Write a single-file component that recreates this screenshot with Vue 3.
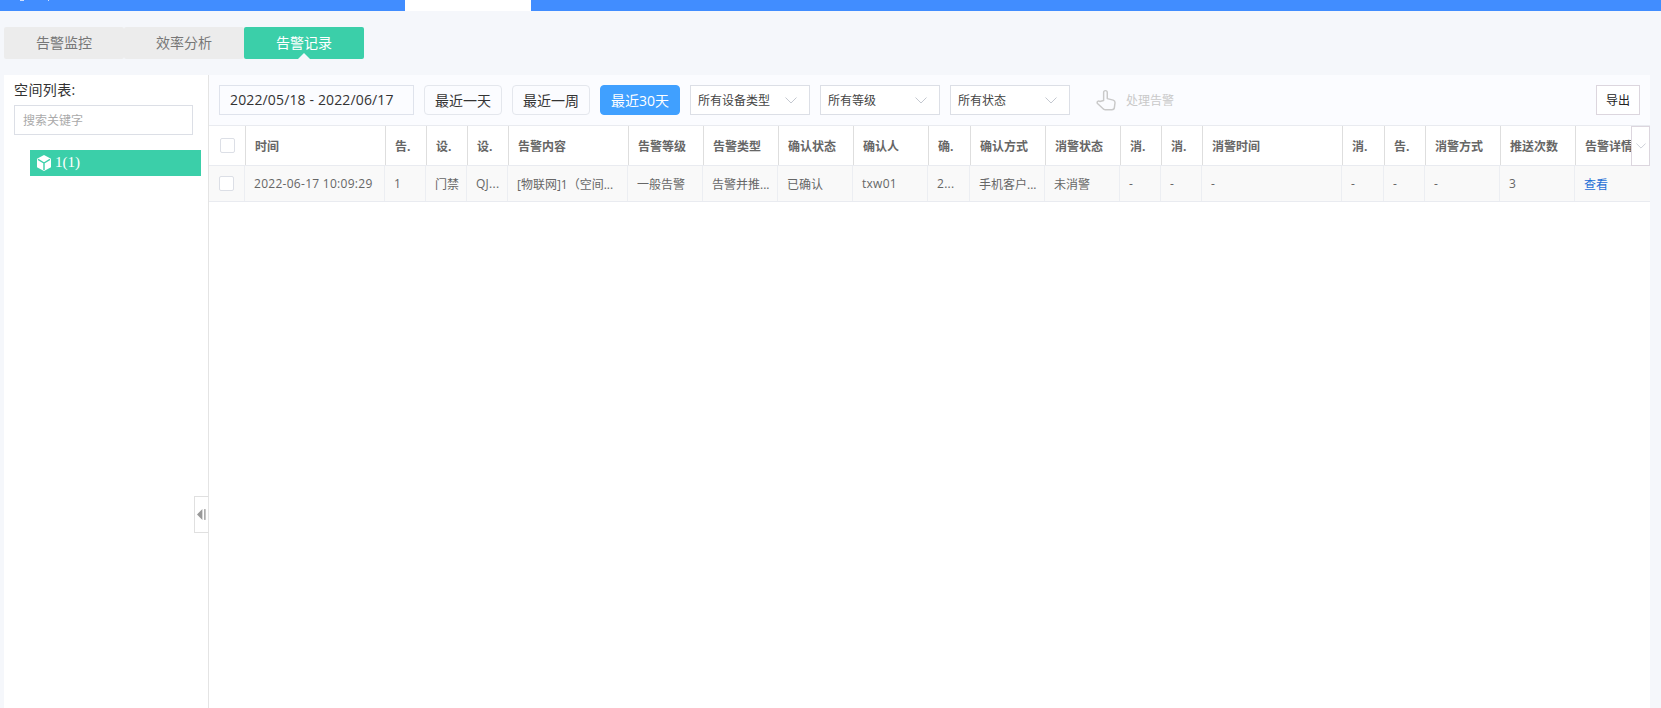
<template>
  <div class="page">
    <div class="topbar">
      <span class="topbar__mark"></span>
      <span class="topbar__mark topbar__mark--small"></span>
      <span class="topbar__tab"></span>
    </div>

    <nav class="tabs">
      <a v-for="t in tabs" :key="t" class="tab" :class="{ 'tab--active': t === activeTab }">{{ t }}</a>
    </nav>

    <main class="main">
      <aside class="side">
        <div class="side__title">空间列表:</div>
        <input class="side__search" placeholder="搜索关键字" />
        <div class="tree-item">
          <svg class="tree-item__icon" viewBox="0 0 14 16" aria-hidden="true">
            <path fill="#fff" d="M7 0 14 3.8V12.2L7 16 0 12.2V3.8z" />
            <path fill="none" stroke="#3bcfa9" stroke-width="1.4" d="M1 4.4 7 8 13 4.4M7 8V15" />
          </svg>
          <span>1(1)</span>
        </div>
        <div class="side__toggle">
          <svg viewBox="0 0 10 12" width="9" height="11" aria-hidden="true">
            <path fill="#999" d="M6 0V12L0 6z" />
            <rect x="8" y="0" width="1.5" height="12" fill="#999" />
          </svg>
        </div>
      </aside>

      <section class="content">
        <div class="toolbar">
          <div class="date">2022/05/18 - 2022/06/17</div>
          <button class="btn">最近一天</button>
          <button class="btn">最近一周</button>
          <button class="btn btn--active">最近30天</button>
          <div v-for="s in selects" :key="s" class="select">
            <span>{{ s }}</span>
            <svg viewBox="0 0 12 7" width="12" height="7" aria-hidden="true">
              <path fill="none" stroke="#c4c8d0" stroke-width="1" d="M.5.5 6 6 11.5.5" />
            </svg>
          </div>
          <div class="handle">
            <svg viewBox="0 0 24 24" width="23" height="23" aria-hidden="true">
              <path fill="none" stroke="#c9c9c9" stroke-width="1.5" stroke-linejoin="round" stroke-linecap="round"
                d="M9 12V3.6a1.9 1.9 0 0 1 3.8 0V10l6.2 1.6c1.3.4 2 1.4 1.9 2.7L20.3 19c-.1 1.6-1.3 2.6-2.8 2.6H10.6c-1 0-1.8-.4-2.4-1.2L2.6 15.2c-.6-.7-.5-1.7.2-2.2.7-.6 1.6-.6 2.3 0z" />
            </svg>
            <span>处理告警</span>
          </div>
          <button class="export">导出</button>
        </div>

        <div class="table">
          <div class="row row--head" :style="{ gridTemplateColumns: headCols }">
            <div class="cell cell--check"><span class="check"></span></div>
            <div v-for="(c, i) in columns" :key="i" class="cell">{{ c.label }}</div>
          </div>
          <div class="row row--body" :style="{ gridTemplateColumns: bodyCols }">
            <div class="cell cell--check"><span class="check"></span></div>
            <div v-for="(c, i) in columns" :key="i" class="cell" :class="{ 'cell--link': c.link, 'cell--num': c.num }">{{ c.value }}</div>
          </div>
          <div class="table__more">
            <svg viewBox="0 0 12 7" width="10" height="6" aria-hidden="true">
              <path fill="none" stroke="#c4c8d0" stroke-width="1" d="M.5.5 6 6 11.5.5" />
            </svg>
          </div>
        </div>
      </section>
    </main>
  </div>
</template>

<script setup>
import { computed } from 'vue'

const tabs = ['告警监控', '效率分析', '告警记录']
const activeTab = '告警记录'
const selects = ['所有设备类型', '所有等级', '所有状态']

const columns = [
  { label: '时间', width: 140, value: '2022-06-17 10:09:29', num: true },
  { label: '告.', width: 41, value: '1' },
  { label: '设.', width: 41, value: '门禁' },
  { label: '设.', width: 41, value: 'QJ...', num: true },
  { label: '告警内容', width: 120, value: '[物联网]1（空间...' },
  { label: '告警等级', width: 75, value: '一般告警' },
  { label: '告警类型', width: 75, value: '告警并推...' },
  { label: '确认状态', width: 75, value: '已确认' },
  { label: '确认人', width: 75, value: 'txw01', num: true },
  { label: '确.', width: 42, value: '2...', num: true },
  { label: '确认方式', width: 75, value: '手机客户...' },
  { label: '消警状态', width: 75, value: '未消警' },
  { label: '消.', width: 41, value: '-' },
  { label: '消.', width: 41, value: '-' },
  { label: '消警时间', width: 140, value: '-' },
  { label: '消.', width: 42, value: '-' },
  { label: '告.', width: 41, value: '-' },
  { label: '消警方式', width: 75, value: '-' },
  { label: '推送次数', width: 75, value: '3' },
  { label: '告警详情', width: 75, value: '查看', link: true }
]

const headCols = computed(() => ['37px', ...columns.map((c) => c.width + 'px')].join(' '))
// 表体比表头左移 1px
const bodyCols = computed(() => {
  const w = columns.map((c) => c.width + 'px')
  w[w.length - 1] = '76px'
  return ['36px', ...w].join(' ')
})
</script>

<style>
html, body { margin: 0; background: #f5f7fb; }
</style>

<style scoped>
.page { height: 708px; display: flex; flex-direction: column; overflow: hidden; background: #f5f7fb; font-family: "Open Sans", "Noto Sans CJK SC", sans-serif; color: #333; }

.topbar { height: 11px; flex: none; background: #418dff; display: flex; align-items: flex-start; padding-left: 20px; }
.topbar__mark { width: 4px; height: 1px; background: #cfe0ff; }
.topbar__mark--small { width: 1px; margin-left: 24px; }
.topbar__tab { width: 126px; height: 11px; background: #fff; margin-left: 356px; }

.tabs { display: flex; margin: 16px 0 16px 4px; flex: none; }
.tab { position: relative; width: 120px; height: 32px; line-height: 32px; text-align: center; font-size: 14px; color: #777; background: #ececec; border-radius: 2px; }
.tab--active { background: #3bcfa9; color: #fff; }
.tab--active::after { content: ""; position: absolute; left: 54px; bottom: 0; border: 6px solid transparent; border-top: 0; border-bottom-color: #f5f7fb; }

.main { flex: 1; min-height: 0; display: flex; margin: 0 11px 0 4px; }

.side { position: relative; width: 205px; flex: none; box-sizing: border-box; background: #fff; border-right: 1px solid #e4e4e4; padding: 5px 15px 0 10px; }
.side__title { font-size: 14px; line-height: 20px; color: #333; height: 25px; letter-spacing: .4px; }
.side__search { display: block; width: 179px; height: 30px; box-sizing: border-box; border: 1px solid #dcdfe6; padding: 0 8px; font: 12px "Open Sans", "Noto Sans CJK SC", sans-serif; outline: none; }
.side__search::placeholder { color: #aaa; opacity: 1; }
.tree-item { display: flex; align-items: center; gap: 4px; width: 171px; height: 26px; box-sizing: border-box; margin: 15px 0 0 16px; padding-left: 7px; background: #3bcfa9; color: #fff; font: 15px/24px "Liberation Serif", serif; }
.tree-item__icon { width: 14px; height: 16px; flex: none; }
.tree-item span { height: 26px; line-height: 24px; }
.side__toggle { position: absolute; right: -1px; top: 421px; width: 13px; height: 35px; display: flex; align-items: center; justify-content: center; background: #fff; border: 1px solid #e0e0e0; border-right-color: #e4e4e4; }

.content { flex: 1; min-width: 0; display: flex; flex-direction: column; background: #fff; }
.toolbar { height: 50px; flex: none; display: flex; align-items: center; box-sizing: border-box; padding: 0 10px; background: #fbfcff; }
.date { width: 195px; height: 30px; box-sizing: border-box; border: 1px solid #dfe3ec; font-size: 14px; line-height: 28px; padding-left: 10px; color: #333; letter-spacing: .14px; }
.btn { height: 30px; width: 78px; margin-left: 10px; box-sizing: border-box; padding: 0; border: 1px solid #e4e7ed; border-radius: 4px; background: #fbfcff; font: 14px "Open Sans", "Noto Sans CJK SC", sans-serif; color: #333; }
.btn--active { width: 80px; background: #40a0ff; border-color: #40a0ff; color: #fff; margin-left: 10px; }
.select { width: 120px; height: 30px; margin-left: 10px; box-sizing: border-box; border: 1px solid #dcdfe6; padding: 0 12px 0 7px; display: flex; align-items: center; justify-content: space-between; font-size: 12px; color: #444; background: #fff; }
.handle { display: flex; align-items: center; gap: 8px; margin-left: 25px; font-size: 12px; color: #c9c9c9; }
.export { margin-left: auto; width: 44px; height: 30px; box-sizing: border-box; padding: 0; border: 1px solid #dcd6de; background: #fff; font: 12px "Open Sans", "Noto Sans CJK SC", sans-serif; color: #222; }

.table { position: relative; flex: 1; border-top: 1px solid #e9ebf0; overflow: hidden; }
.row { display: grid; font-size: 12px; }
.row--head { height: 39px; background: #fff; border-bottom: 1px solid #e9ebf0; font-weight: 700; color: #666; }
.row--body { height: 35px; background: #f9f9f9; border-bottom: 1px solid #e9ebf0; color: #666; }
.cell { display: flex; align-items: center; padding: 0 0 0 9px; min-width: 0; overflow: hidden; white-space: nowrap; box-sizing: border-box; }
.row--head .cell { border-right: 1px solid #dedede; }
.row--body .cell { border-right: 1px solid #eceef2; }
.cell--check { justify-content: center; padding: 0; }
.cell--num { letter-spacing: .28px; }
.row--body .cell--link { color: #1f6fd6; }
.check { width: 13px; height: 13px; border: 1px solid #dcdfe6; border-radius: 2px; background: #fff; }
.table__more { position: absolute; right: 0; top: 0; width: 19px; height: 40px; box-sizing: border-box; border: 1px solid #dcd6de; background: #fff; display: flex; align-items: center; justify-content: center; }
</style>
